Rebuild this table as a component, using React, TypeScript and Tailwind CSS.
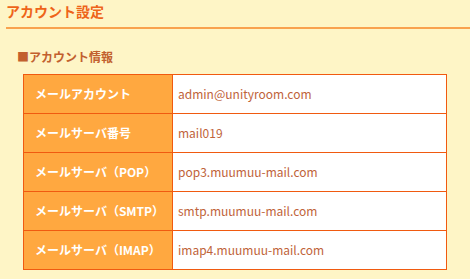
const ROWS: { label: string; value: string }[] = [
  { label: "メールアカウント", value: "admin@unityroom.com" },
  { label: "メールサーバ番号", value: "mail019" },
  { label: "メールサーバ（POP）", value: "pop3.muumuu-mail.com" },
  { label: "メールサーバ（SMTP）", value: "smtp.muumuu-mail.com" },
  { label: "メールサーバ（IMAP）", value: "imap4.muumuu-mail.com" },
];

export default function App() {
  return (
    <div
      className="w-[470px] h-[279px] bg-[#fef5c6] overflow-hidden"
      style={{ fontFamily: '"Noto Sans CJK JP", sans-serif' }}
    >
      <div className="pl-[6px] pt-[1px]">
        <h1 className="text-[14px] leading-[20px] font-bold text-[#ee6419]">アカウント設定</h1>
        <div className="mt-[6px] h-[2px] bg-[#f9a24e]" />
      </div>

      <section className="pl-[17px] pt-[20px]">
        <h2 className="text-[12px] leading-[16px] font-bold text-[#c2602e]">■アカウント情報</h2>
      </section>

      <table className="ml-[23px] mt-[9px] w-[424px] border-collapse">
        <tbody>
          {ROWS.map((row) => (
            <tr key={row.label} className="h-[39px]">
              <th className="w-[149px] border border-[#f05a10] bg-[#ffa840] pl-[11px] text-left text-[12px] font-bold text-white">
                {row.label}
              </th>
              <td className="border border-[#f05a10] bg-white pl-[5px] text-[12px] text-[#c0633a]">
                {row.value}
              </td>
            </tr>
          ))}
        </tbody>
      </table>
    </div>
  );
}
